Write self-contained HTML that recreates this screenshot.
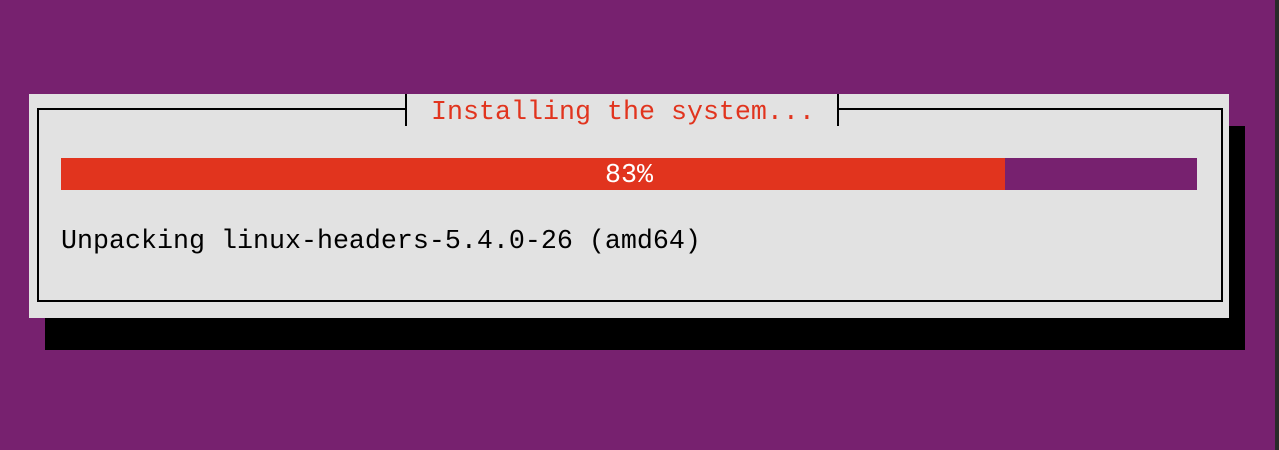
<!DOCTYPE html>
<html><head><style>
body{margin:0;width:1279px;height:450px;background:#77216f;position:relative;overflow:hidden;font-family:"Liberation Mono","DejaVu Sans Mono",monospace}
div{position:absolute}
.t{font-size:26.67px;line-height:32px;white-space:pre}
</style></head><body>
<div style="left:1275px;top:0;width:4px;height:450px;background:#2a2a2a"></div>
<div style="left:45px;top:126px;width:1200px;height:224px;background:#000"></div>
<div style="left:29px;top:94px;width:1200px;height:224px;background:#e2e2e2"></div>
<div style="left:37px;top:108px;width:1182px;height:190px;border:2px solid #000"></div>
<div style="left:405px;top:94px;width:434px;height:32px;background:#e2e2e2;border-left:2px solid #000;border-right:2px solid #000;box-sizing:border-box"></div>
<div class="t" style="left:431px;top:97px;color:#e1341e">Installing the system...</div>
<div style="left:61px;top:158px;width:1136px;height:32px;background:#77216f"></div>
<div style="left:61px;top:158px;width:944px;height:32px;background:#e1341e"></div>
<div class="t" style="left:605px;top:160px;color:#fff">83%</div>
<div class="t" style="left:61px;top:226px;color:#000">Unpacking linux-headers-5.4.0-26 (amd64)</div>
</body></html>
